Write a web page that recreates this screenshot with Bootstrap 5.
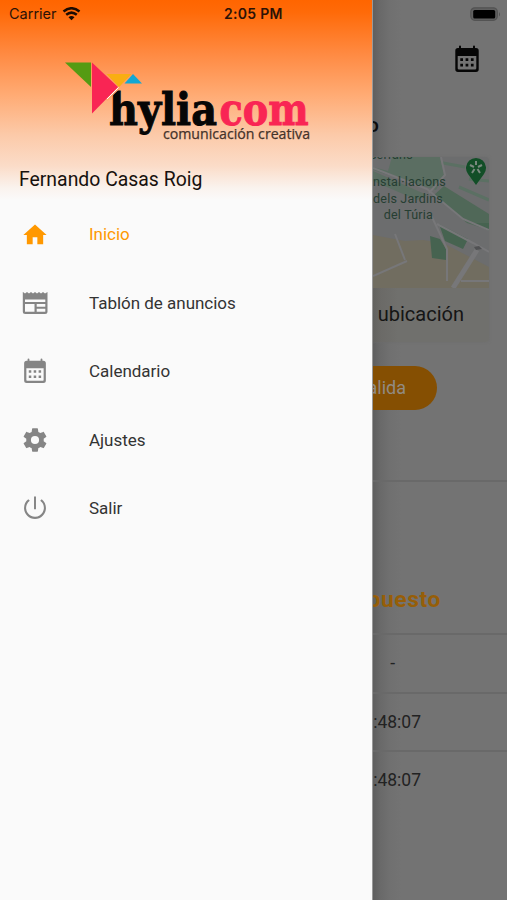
<!DOCTYPE html>
<html lang="es">
<head>
<meta charset="utf-8">
<meta name="viewport" content="width=device-width, initial-scale=1">
<title>Hyliacom</title>
<link href="https://cdn.jsdelivr.net/npm/bootstrap@5.3.0/dist/css/bootstrap.min.css" rel="stylesheet">
<style>
body{font-family:Roboto,"Noto Sans",sans-serif;background:#737373;color:#111}
.screen{width:507px;height:900px}
svg{display:block}
.status{height:28px;padding:0 6px 0 9px;font:500 14px/28px Inter,sans-serif;color:#2b1206;z-index:3}
.status .carrier{font-weight:400;font-size:14.5px;width:215px}
.status .clock{font-weight:600;font-size:14px;letter-spacing:.3px}
.status .wifi{margin-left:-3px}
.drawer{width:373px;background:#fafafa;border-right:1px solid #999;z-index:2}
.brand{height:201px;padding:57px 0 0 60px;background:linear-gradient(#ff6500 0,#ff6a08 12px,#ff8a42 54px,#ffab74 95px,#fccaa9 135px,#fbdcc8 166px,#faf3ee 188px,#fafafa 200px)}
.brand .user{font-size:19.4px;line-height:24px;margin:21px 0 0 -41px;color:#17110d}
.menu .entry{height:68.4px;padding:0 21px;font-size:17px;color:#333;letter-spacing:-.02px;gap:40px}
.menu .entry svg{fill:#858585;position:relative;top:-.5px}
.menu .entry.active{color:#ff9800}
.menu .entry.active svg{fill:#ff9800}
.page{width:134px;background:linear-gradient(90deg,#5f5f5f 0,#696969 7px,#707070 17px,#737373 28px);white-space:nowrap}
.appbar{height:91px;padding:45px 26px 0 0}
.title{height:66px;padding:21px 128px 0 0;font-size:21px;line-height:26px;font-weight:500;color:#0c0c0c}
.place{width:116px;height:185px;background:linear-gradient(90deg,#63625f 0,#6b6a67 8px,#70706d 25px);border-radius:0 4px 4px 0;box-shadow:0 0 3px #6d6d6d}
.place .caption{padding:12px 25px 0 0;font-size:20px;line-height:28px;color:#151515;word-spacing:-1px}
.exit{width:64px;height:44px;margin-top:24px;padding-right:31px;border-radius:0 22px 22px 0;background:#854f02;color:#918b83;font-size:18px;line-height:44px}
.rowline{border-top:2px solid #696969}
.head{height:153px;margin-top:70px;padding:104px 66px 0 0;font-size:22.8px;line-height:28px;font-weight:700;color:#965e08;letter-spacing:.6px}
.cell{height:58.6px;padding-right:86px;font-size:17.5px;line-height:56.6px;color:#222}
.cell.dash{padding-right:112px}
</style>
</head>
<body>
<svg width="0" height="0" class="position-absolute" aria-hidden="true">
<symbol id="calendar" viewBox="0 0 24 28"><path fill-rule="evenodd" d="M4 3V1.500Q4 .5 5 .5t1 1V3h12V1.500Q18 .5 19 .5t1 1V3h1q2.700 0 2.700 2.700v18.600q0 2.700-2.700 2.700H3Q.3 27 .3 24.300V5.700Q.3 3 3 3zM2.700 11v12.300q0 1.300 1.300 1.300h16q1.300 0 1.300-1.300V11zM5.300 13.300h2.700v2.700h-2.700zm5.300 0h2.700v2.700h-2.700zm5.300 0h2.700v2.700h-2.700zm-10.600 5.500h2.700v2.700h-2.700zm5.300 0h2.700v2.700h-2.700zm5.300 0h2.700v2.700h-2.700z"/></symbol>
</svg>
<div class="screen position-relative overflow-hidden d-flex">
<header class="status position-absolute top-0 start-0 w-100 d-flex align-items-center">
<div class="carrier d-flex align-items-center gap-2">Carrier
<svg class="wifi" width="19" height="14" viewBox="0 0 18 14" fill="none" stroke="#1c0b02" stroke-width="2.500"><path d="M1 4.500Q9-2 17 4.500M3.700 7.800Q9 3.400 14.300 7.800"/><path d="M6 10.300Q9 7.800 12 10.300L9 13.300z" fill="#1c0b02" stroke="none"/></svg></div>
<span class="clock">2:05 PM</span>
<svg class="ms-auto" width="31" height="15" viewBox="0 0 31 15"><rect x=".8" y=".8" width="26.500" height="12.500" rx="4" fill="#606060" stroke="#535353" stroke-width="1.200"/><rect x="3.200" y="3" width="22" height="8.500" rx="1.500" fill="#000"/><path d="M29 5q2 2.300 0 4.600z" fill="#535353"/></svg>
</header>
<aside class="drawer flex-shrink-0">
<div class="brand">
<svg width="255" height="90" viewBox="60 57 255 90">
<path d="M65 62.500H91V87z" fill="#559b13"/><path d="M107 74h24L119 87z" fill="#f9ae12"/><path d="M124.500 83.500L133 74l9 9.500z" fill="#12a7d3"/>
<g font-family="'DejaVu Serif',serif" font-weight="700" font-size="45" stroke-width="1"><text x="109" y="124.500" textLength="108" lengthAdjust="spacingAndGlyphs" fill="#060606" stroke="#060606">hylia</text><text x="219.500" y="124.500" textLength="89" lengthAdjust="spacingAndGlyphs" fill="#f92554" stroke="#f92554">com</text></g>
<path d="M105 86h15v2.500L107 101z" fill="#ffa56b"/>
<path d="M107 74h24L119 87z" fill="#f9ae12"/><path d="M92 62.500L118 87 92 113.500z" fill="#f92554"/><path d="M118.500 87.500L107 99" stroke="#fff" stroke-width="1"/>
<text x="163" y="138.500" font-family="'Open Sans',sans-serif" font-size="14.500" textLength="147" lengthAdjust="spacingAndGlyphs" fill="#44322a" stroke="#44322a" stroke-width=".25">comunicación creativa</text>
</svg>
<div class="user">Fernando Casas Roig</div>
</div>
<nav class="menu d-flex flex-column">
<a class="entry active d-flex align-items-center text-decoration-none" href="#"><svg width="28" height="28" viewBox="0 0 24 24"><path d="M10 20v-6h4v6h5v-8h3L12 3 2 12h3v8z"/></svg><span>Inicio</span></a>
<a class="entry d-flex align-items-center text-decoration-none" href="#"><svg width="28" height="28" viewBox="0 0 28 28"><path fill-rule="evenodd" d="M2 3l2 1.500L6 3l2 1.500L10 3l2 1.500L14 3l2 1.500L18 3l2 1.500L22 3l2 1.500L26.500 3v19.500q0 2.500-2.500 2.500H4.300Q1.800 25 1.800 22.500V3zM4 10.500V13h20.300v-2.500zM4 15v7.700h9.500V15zm11.700 0v2.700h8.600V15zm0 4.700v3h8.600v-3z"/></svg><span>Tablón de anuncios</span></a>
<a class="entry d-flex align-items-center text-decoration-none" href="#"><svg width="28" height="26"><use href="#calendar"/></svg><span>Calendario</span></a>
<a class="entry d-flex align-items-center text-decoration-none" href="#"><svg width="28" height="28" viewBox="0 0 24 24"><path d="M19.430 12.980c.04-.32.07-.64.07-.98s-.03-.66-.07-.98l2.110-1.650c.19-.15.24-.42.12-.64l-2-3.460c-.12-.22-.39-.3-.61-.22l-2.490 1c-.52-.4-1.080-.73-1.690-.98l-.38-2.650C14.460 2.180 14.250 2 14 2h-4c-.25 0-.46.18-.49.42l-.38 2.650c-.61.25-1.170.59-1.690.98l-2.490-1c-.23-.09-.49 0-.61.22l-2 3.460c-.13.22-.07.49.12.64l2.110 1.650c-.04.32-.07.65-.07.98s.03.66.07.98l-2.110 1.650c-.19.15-.24.42-.12.64l2 3.460c.12.22.39.3.61.22l2.490-1c.52.4 1.080.73 1.690.98l.38 2.650c.03.24.24.42.49.42h4c.25 0 .46-.18.49-.42l.38-2.650c.61-.25 1.170-.59 1.690-.98l2.490 1c.23.09.49 0 .61-.22l2-3.460c.12-.22.07-.49-.12-.64zM12 15.500A3.500 3.500 0 1 1 12 8.500a3.500 3.500 0 0 1 0 7z"/></svg><span>Ajustes</span></a>
<a class="entry d-flex align-items-center text-decoration-none" href="#"><svg width="28" height="28" viewBox="0.500 0.500 23 23"><path d="M12.800 2.500h-1.600v10.500h1.600zm4.700 2.300l-1.200 1.200A7.300 7.300 0 0 1 19.300 12a7.300 7.300 0 1 1-11.600-6L6.500 4.800A9 9 0 0 0 3 12a9 9 0 0 0 18 0c0-2.900-1.400-5.500-3.500-7.200z"/></svg><span>Salir</span></a>
</nav>
</aside>
<main class="page flex-shrink-0 overflow-hidden d-flex flex-column">
<div class="appbar d-flex justify-content-end"><svg width="28" height="28" fill="#060606"><use href="#calendar"/></svg></div>
<div class="title d-flex justify-content-end">o</div>
<section class="place overflow-hidden">
<svg width="116" height="131" viewBox="0 0 116 131">
<rect width="116" height="131" fill="#6c6d6e"/>
<path d="M0 78L32 84 50 83 70 86 116 110V131H0z" fill="#716d60"/>
<path d="M19 0H67L71 18 63 33 0 13V10L15 14zM0 14L54 38 44 43 0 24z" fill="#5b6e62"/>
<path d="M71 29L116 57V73L94 66 61 38z" fill="#506858"/><path d="M66 67L95 82 90 92 72 84zM57 79L67 82 73 92V103L59 101zM99 66L116 66V74z" fill="#466350"/>
<path d="M70 6L92 10M96 22L116 24M86 30L116 43" stroke="#5b7063" stroke-width="3"/>
<g fill="none" stroke="#777779" stroke-width="2"><path d="M0 11L54 32 90 62 116 73M68 0L72 18 56 36M58 58L74 92V124M64 67L100 86 116 95M22 77L32 103M0 119L34 104M88 124H116"/></g>
<path d="M104 93L80 131" stroke="#777779" stroke-width="5"/><path d="M101 90l5-1 3 3-6 1z" fill="#505153"/>
<g font-family="Roboto,sans-serif" font-size="12.500" fill="#263e32" letter-spacing=".2"><text x="-4" y="2">Serrans</text><text x="73" y="29" text-anchor="end">nstal·lacions</text><text x="70" y="46" text-anchor="end">dels Jardins</text><text x="60" y="62" text-anchor="end">del Túria</text></g>
<path d="M103 28L95 17A10 10 0 1 1 111 17z" fill="#124e27"/><g stroke="#7a897f" stroke-width="2" fill="none"><path d="M103 8V4M105 10L109 8M104.500 12L107 16M101.500 12L99 16M101 10L97 8"/></g>
</svg>
<div class="caption d-flex justify-content-end">n ubicación</div>
</section>
<div class="exit d-flex justify-content-end overflow-hidden">Salida</div>
<div class="rowline head d-flex justify-content-end">puesto</div>
<div class="rowline cell dash d-flex justify-content-end">-</div>
<div class="rowline cell d-flex justify-content-end">:48:07</div>
<div class="rowline cell d-flex justify-content-end">:48:07</div>
</main>
</div>
<script src="https://cdn.jsdelivr.net/npm/bootstrap@5.3.0/dist/js/bootstrap.bundle.min.js"></script>
</body>
</html>
